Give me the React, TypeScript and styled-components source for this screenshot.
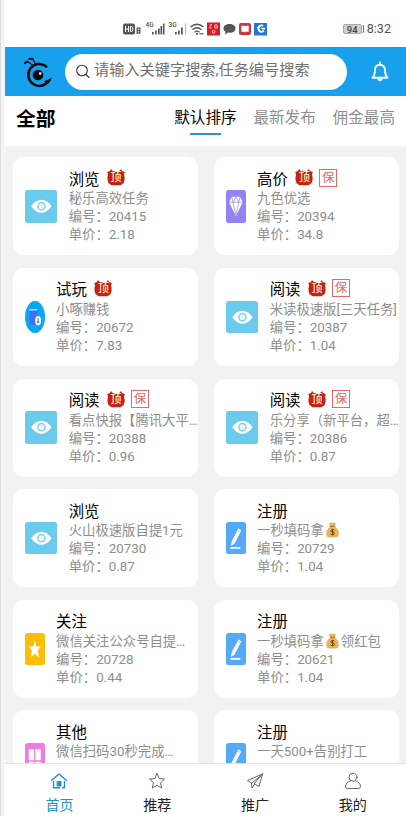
import React from "react";
import styled, { createGlobalStyle } from "styled-components";

const Global = createGlobalStyle`
  * { box-sizing: border-box; }
  html, body { margin: 0; padding: 0; }
  body { font-family: Roboto, "Noto Sans CJK SC", sans-serif; background: #fff; overflow: hidden; }
`;

const Screen = styled.div`
  width: 406px;
  height: 816px;
  display: flex;
  flex-direction: column;
  border-left: 1px solid #dcdcdc;
  padding-left: 4px;
  background: linear-gradient(90deg, #f5f5f5 4px, #fff 4px);
  overflow: hidden;
`;

const StatusBar = styled.div`
  height: 47px;
  flex: none;
  padding: 10px 15px 0 118px;
  display: flex;
  justify-content: space-between;
  align-items: center;
`;

const StatusRight = styled.div`
  display: flex;
  align-items: center;
  gap: 5px;
  color: #555;
  font-size: 12.6px;
  line-height: 18px;
`;

const Battery = styled.span`
  width: 19px;
  height: 10px;
  border-radius: 2px;
  border: 1px solid #aaa;
  background: #cfcfcf;
  font-size: 9.5px;
  line-height: 9px;
  text-align: center;
  font-weight: 500;
  color: #444;
  box-shadow: 2px 0 0 -1px #fff, 3px 0 0 -1px #777;
`;

const TopBar = styled.header`
  height: 49px;
  flex: none;
  background: #17a1ec;
  display: flex;
  align-items: center;
  padding: 0 17px 0 17px;
`;

const SearchBox = styled.div`
  width: 281.5px;
  height: 36px;
  margin: 0 auto 0 11px;
  padding-left: 11px;
  border-radius: 18px;
  background: #fff;
  display: flex;
  align-items: center;
  gap: 4px;
  font-size: 15.2px;
  color: #707070;
  white-space: nowrap;
`;

const Placeholder = styled.span`
  line-height: 22px;
  padding-bottom: 3px;
`;

const FilterBar = styled.div`
  height: 50px;
  flex: none;
  display: flex;
  align-items: flex-start;
  padding: 0 11px 0 11px;
`;

const FilterTitle = styled.h1`
  margin: 10px auto 0 0;
  font-size: 19.8px;
  line-height: 28px;
  font-weight: 700;
  color: #000;
`;

const FilterTab = styled.div<{ $active?: boolean }>`
  margin: 11px 0 0 16.8px;
  height: 28px;
  font-size: 15.6px;
  line-height: 22px;
  color: ${(p) => (p.$active ? "#000" : "#8f8f8f")};
  display: flex;
  flex-direction: column;
  align-items: center;
  justify-content: space-between;
  &::after {
    content: "";
    width: 31px;
    height: 2px;
    background: ${(p) => (p.$active ? "#2196d3" : "transparent")};
  }
`;

const List = styled.main`
  flex: 1;
  min-height: 0;
  overflow: hidden;
  background: #f2f2f2;
  padding: 11.4px 7.5px 0 8px;
  display: grid;
  grid-template-columns: 185px 184.5px;
  justify-content: space-between;
  align-content: start;
  grid-auto-rows: 98px;
  row-gap: 12.6px;
`;

const Card = styled.article`
  background: #fff;
  border-radius: 11px;
  display: flex;
  align-items: center;
  gap: 11.4px;
  padding-left: 12px;
  min-width: 0;
`;

const Tile = styled.div<{ $color: string; $wide?: boolean; $round?: boolean }>`
  flex: none;
  width: ${(p) => (p.$wide ? 32.3 : 19.7)}px;
  height: 32.4px;
  border-radius: ${(p) => (p.$round ? "50%" : "2.5px")};
  background: ${(p) => p.$color};
  overflow: hidden;
  svg { display: block; width: 100%; height: 100%; }
`;

const Info = styled.div`
  min-width: 0;
  flex: 1;
  height: 98px;
  padding-top: 8px;
`;

const TitleRow = styled.div`
  display: flex;
  align-items: center;
  height: 25px;
  font-size: 15.4px;
  color: #000;
`;

const Line = styled.div`
  font-size: 13.35px;
  line-height: 18px;
  color: #8e8e8e;
  white-space: nowrap;
`;

const TopBadge = styled.span`
  position: relative;
  width: 18px;
  height: 17px;
  margin-left: 7.5px;
  svg { display: block; }
`;

const TopText = styled.span`
  position: absolute;
  inset: 1px 0 0;
  text-align: center;
  font-size: 11px;
  line-height: 15px;
  font-weight: 500;
  color: #fff0c8;
`;

const BaoBadge = styled.span`
  width: 18px;
  height: 18px;
  margin-left: 6px;
  border: 1px solid #e26a6a;
  color: #dd6a66;
  font-size: 12.5px;
  line-height: 15px;
  text-align: center;
`;

const TabBar = styled.nav`
  height: 53px;
  flex: none;
  border-top: 1px solid #e2e2e2;
  background: #fff;
  display: grid;
  grid-template-columns: repeat(4, 97.8px);
  padding-left: 5.5px;
`;

const Tab = styled.div<{ $active?: boolean }>`
  display: flex;
  flex-direction: column;
  align-items: center;
  padding-top: 8px;
  font-size: 14px;
  line-height: 20px;
  gap: 4.5px;
  color: ${(p) => (p.$active ? "#1e93cf" : "#222")};
  svg { color: ${(p) => (p.$active ? "#1e93cf" : "#666")}; }
`;

const StatusIcons = () => (
  <svg width="146" height="16" viewBox="0 0 146 16">
    <rect x="0" y="2.500" width="12" height="11" rx="2" fill="#555" />
    <path d="M2.500 5v6M5.500 5v6M2.500 8h3M7.500 5.500v5M7.500 5.500h.8q1.700 0 1.700 2.500t-1.700 2.500h-.8" stroke="#fff" fill="none" />
    <path d="M14.200 7.200h2.600v5h-2.600zM14.200 9.700h2.600" stroke="#555" strokeWidth="1.300" fill="none" />
    <text x="22.500" y="6" fontSize="6.500" fontWeight="500" fill="#555">4G</text>
    <g fill="#555">
      <path d="M29 11h1.700v2.500H29zM32 9.500h1.700v4H32zM35 7.500h1.700v6H35zM37.500 5h1.700v8.500h-1.700zM40 2.500h1.500v11H40z" />
    </g>
    <text x="45.500" y="6" fontSize="6.500" fontWeight="500" fill="#555">3G</text>
    <g fill="#555">
      <path d="M52 11h1.700v2.500H52zM55 9.500h1.700v4H55zM58 6.500h1.700v7H58z" />
      <path fill="#bbb" d="M62 2.500h1.200v11H62z" />
    </g>
    <g stroke="#555" fill="none" strokeWidth="1.300">
      <path d="M67.500 6q6.500-5.500 13 0M69.500 8.700q4.500-4 9 0M71.500 11.200q2.500-2 5 0" />
    </g>
    <circle cx="74" cy="12.800" r="1.100" fill="#555" />
    <path d="M76.500 12.800h4" stroke="#555" strokeWidth="1.200" />
    <rect x="84" y="1.500" width="13" height="13" fill="#d5163f" />
    <path d="M86 4h3M88.500 3l-2 4M86 7h3M91.500 4v3h3V4zM93 3v5" stroke="#ffb27a" strokeWidth=".8" fill="none" />
    <circle cx="90.500" cy="10.800" r="1.400" fill="none" stroke="#ffe27a" />
    <path d="M106.500 3c-3.500 0-6 1.800-6 4.400 0 1.500.8 2.600 2 3.400l-.3 3 2.800-2.200c5 .5 7.500-1.500 7.500-4.200S110 3 106.500 3z" fill="#555" />
    <rect x="116" y="2" width="12" height="12" rx="2" fill="#cf3545" />
    <path d="M118.300 4.800h3l.7.500.7-.5h3v6h-3l-.7.600-.7-.6h-3z" fill="#fff" />
    <rect x="131" y="2" width="13" height="12.500" fill="#2577d2" />
    <path d="M140 4.700c-2.500-1-4.700.7-4.500 3.200.2 3 3.800 4 5.300 1.700" stroke="#fff" strokeWidth="1.900" fill="none" />
    <path d="M133.500 6.800l3-2.500v3zM138 6.700h4v1.800h-3z" fill="#fff" />
  </svg>
);

const Logo = () => (
  <svg width="32" height="34" viewBox="0 0 32 34" fill="none" stroke="#080808" strokeLinecap="round">
    <path d="M24 11.200A11 11 0 1 0 26.300 26.300" strokeWidth="2.500" />
    <path d="M19.500 9.600q4-.8 6.500 2.400l-2 .8q-1.500-2-4.500-3.200z" fill="#080808" stroke="none" />
    <path d="M21.500 26.300q3.500-.8 8.300-3.600-.8 3.300-3.600 5.800z" fill="#080808" stroke="none" />
    <circle cx="16" cy="20" r="5.300" fill="#080808" stroke="none" />
    <circle cx="18.200" cy="18.500" r="1.300" fill="#fff" stroke="none" />
    <path d="M10.500 11C9.500 8.500 7 7 3.500 7.200M13.200 9.500C13 6.500 11 4.200 8.500 3.500" strokeWidth="1.100" />
    <path d="M2.800 8.300l2.800-2M7.300 3.800l3.400 .2" strokeWidth="1.900" />
  </svg>
);

const SearchIcon = () => (
  <svg width="14" height="15" viewBox="0 0 14 15" fill="none" stroke="#333" strokeWidth="1.100" strokeLinecap="round">
    <circle cx="6" cy="6.500" r="5.300" />
    <path d="M10 10.500l3 3" />
  </svg>
);

const Bell = () => (
  <svg width="18" height="21" viewBox="0 0 18 21" fill="none" stroke="#fff" strokeWidth="1.900" strokeLinejoin="round">
    <path d="M1.500 16.800h15c-1.800-1.600-2.400-3-2.400-7 0-3.600-2-6-5.100-6s-5.100 2.400-5.100 6c0 4-.6 5.400-2.400 7z" />
    <path d="M9 3.600V1.500M7.600 18.600q1.400 1.400 2.800 0" strokeLinecap="round" />
  </svg>
);

type Kind = "eye" | "gem" | "wallet" | "pen" | "star" | "grid";

const kinds: Record<Kind, { color: string; wide?: boolean; round?: boolean; art: React.ReactNode }> = {
  eye: {
    color: "#6acbed",
    wide: true,
    art: (
      <svg viewBox="0 0 32 32">
        <path d="M6 16c3.500-4.500 7-6.500 10.300-6.500S23 11.500 26.500 16c-3.500 4.500-7 6.500-10.200 6.500S9.500 20.500 6 16z" fill="#fff" />
        <circle cx="16.300" cy="16" r="3.600" fill="#e8f7fc" stroke="#7fcde9" strokeWidth="1.400" />
      </svg>
    ),
  },
  gem: {
    color: "#9282f5",
    art: (
      <svg viewBox="0 0 20 32">
        <path d="M6 6.500h8l3 5.500-7 14L3 12z" fill="#fff" />
        <path d="M3 12h14M7 12l3 13 3-13M6 7l1.200 5L10 7l3 5 1-5" stroke="#9282f5" strokeWidth=".7" fill="none" />
      </svg>
    ),
  },
  wallet: {
    color: "#08a9f2",
    round: true,
    art: (
      <svg viewBox="0 0 20 32">
        <path d="M4.500 9h9v15h-9z" fill="#4173ef" />
        <path d="M4.500 8.500h8" stroke="#fff" />
        <ellipse cx="13.300" cy="19.500" rx="3" ry="4.700" fill="#fff" />
        <path d="M13.300 16.800v5M12 20l1.300 2 1.300-2" stroke="#3978ef" fill="none" />
      </svg>
    ),
  },
  pen: {
    color: "#53aafa",
    art: (
      <svg viewBox="0 0 20 32">
        <path d="M12.700 6l2.800 2.300L8.800 21.500 5 24l.8-5zM4.500 25h10v1.700h-10z" fill="#fff" />
        <path d="M12 7.500l2.500 2" stroke="#53aafa" strokeWidth=".7" />
      </svg>
    ),
  },
  star: {
    color: "#fdbd09",
    art: (
      <svg viewBox="0 0 20 32">
        <path d="M10 7.500l1.800 5.800h4.300l-3.200 4.200 1.300 7-4.200-3.800-4.200 3.800 1.300-7-3.200-4.200h4.300z" fill="#fff" />
      </svg>
    ),
  },
  grid: {
    color: "#ec7be6",
    art: (
      <svg viewBox="0 0 20 32">
        <path d="M3.800 6h5.500v11H3.800zM10.500 6h5.500v11h-5.500zM3.800 18.500h5.500v8H3.800zM10.500 18.500h5.500v2h-3.500v6h-2z" fill="#fff" />
      </svg>
    ),
  },
};

interface Task {
  kind: Kind;
  title: string;
  name: string;
  id?: string;
  price?: string;
  top?: boolean;
  bao?: boolean;
}

const tasks: Task[] = [
  { kind: "eye", title: "浏览", name: "秘乐高效任务", id: "20415", price: "2.18", top: true },
  { kind: "gem", title: "高价", name: "九色优选", id: "20394", price: "34.8", top: true, bao: true },
  { kind: "wallet", title: "试玩", name: "小啄赚钱", id: "20672", price: "7.83", top: true },
  { kind: "eye", title: "阅读", name: "米读极速版[三天任务]", id: "20387", price: "1.04", top: true, bao: true },
  { kind: "eye", title: "阅读", name: "看点快报【腾讯大平…", id: "20388", price: "0.96", top: true, bao: true },
  { kind: "eye", title: "阅读", name: "乐分享（新平台，超…", id: "20386", price: "0.87", top: true, bao: true },
  { kind: "eye", title: "浏览", name: "火山极速版自提1元", id: "20730", price: "0.87" },
  { kind: "pen", title: "注册", name: "一秒填码拿💰", id: "20729", price: "1.04" },
  { kind: "star", title: "关注", name: "微信关注公众号自提…", id: "20728", price: "0.44" },
  { kind: "pen", title: "注册", name: "一秒填码拿💰领红包", id: "20621", price: "1.04" },
  { kind: "grid", title: "其他", name: "微信扫码30秒完成…" },
  { kind: "pen", title: "注册", name: "一天500+告别打工" },
];

const MoneyBag = styled.svg`
  width: 15px;
  height: 16px;
  margin: 0 1px;
  vertical-align: -3px;
`;

const Money = () => (
  <MoneyBag viewBox="0 0 15 16">
    <path d="M5 4L3.800 1.500Q6 0 7.500 1 9.500 0 11 1.500L9.800 4z" fill="#e2b565" />
    <path d="M5 4.500h5c3 2.500 4 5 3.700 8-.2 2-1.500 3-3.200 3H4.700c-1.900 0-3.200-1-3.400-3-.3-3 .7-5.500 3.700-8z" fill="#e7b45b" />
    <path d="M4.800 4.300h5.400" stroke="#a66d26" strokeWidth="1.100" />
    <path d="M9.400 8.200c-1-1.100-3.600-.8-3.600.7 0 1.700 3.700.8 3.700 2.600 0 1.500-2.800 1.700-3.900.5M7.600 6.800v6.500" stroke="#6f4317" fill="none" />
  </MoneyBag>
);

const TaskCard = ({ task }: { task: Task }) => {
  const k = kinds[task.kind];
  const parts = task.name.split("💰");
  return (
    <Card>
      <Tile $color={k.color} $wide={k.wide} $round={k.round}>{k.art}</Tile>
      <Info>
        <TitleRow>
          {task.title}
          {task.top && (
            <TopBadge>
              <svg width="18" height="17" viewBox="0 0 18 17">
                <path d="M.2 3L3 2l1-2 2 2.200h6L14 0l1 2 2.800 1-.8 2.500c1 3 .8 6-.4 8.500L13.500 16.300h-9L1.500 14C.3 11.500.1 8.500 1.100 5.500z" fill="#c92014" />
              </svg>
              <TopText>顶</TopText>
            </TopBadge>
          )}
          {task.bao && <BaoBadge>保</BaoBadge>}
        </TitleRow>
        <Line>
          {parts[0]}
          {parts.length > 1 && <Money />}
          {parts[1]}
        </Line>
        {task.id && <Line>编号：{task.id}</Line>}
        {task.price && <Line>单价：{task.price}</Line>}
      </Info>
    </Card>
  );
};

const Glyph = styled.svg.attrs({ viewBox: "0 0 18 18", fill: "none", stroke: "currentColor" })`
  width: 18px;
  height: 18px;
  stroke-width: 1;
  stroke-linecap: round;
  stroke-linejoin: round;
`;

export default function App() {
  return (
    <>
      <Global />
      <Screen>
        <StatusBar>
          <StatusIcons />
          <StatusRight>
            <Battery>94</Battery>
            <span>8:32</span>
          </StatusRight>
        </StatusBar>
        <TopBar>
          <Logo />
          <SearchBox>
            <SearchIcon />
            <Placeholder>请输入关键字搜索,任务编号搜索</Placeholder>
          </SearchBox>
          <Bell />
        </TopBar>
        <FilterBar>
          <FilterTitle>全部</FilterTitle>
          <FilterTab $active>默认排序</FilterTab>
          <FilterTab>最新发布</FilterTab>
          <FilterTab>佣金最高</FilterTab>
        </FilterBar>
        <List>
          {tasks.map((t, i) => <TaskCard key={i} task={t} />)}
        </List>
        <TabBar>
          <Tab $active>
            <Glyph>
              <path d="M1.500 8.500L9 2l7.500 6.500M3.500 9.500v6.300h6M14.500 9.500v6.300h-2" strokeWidth="1.400" />
              <path d="M7.500 9.500h3.500V14H7.500z" fill="currentColor" />
            </Glyph>
            首页
          </Tab>
          <Tab>
            <Glyph>
              <path d="M9 1.500l2.200 5 5.300.6-4 3.600 1.200 5.300L9 13.300 4.300 16l1.200-5.300-4-3.600 5.300-.6z" />
            </Glyph>
            推荐
          </Tab>
          <Tab>
            <Glyph>
              <path d="M16.500 2L1.500 8.500l4 2.500zM16.500 2L13 14.500 8.500 12zM5.500 11l.5 5 2.500-4" />
            </Glyph>
            推广
          </Tab>
          <Tab>
            <Glyph>
              <circle cx="9" cy="5.200" r="4" />
              <path d="M6.500 8.800C3.500 9.800 1.500 12 1.500 14.500q0 2 2 2h11q2 0 2-2c0-2.500-2-4.700-5-5.700" />
            </Glyph>
            我的
          </Tab>
        </TabBar>
      </Screen>
    </>
  );
}
